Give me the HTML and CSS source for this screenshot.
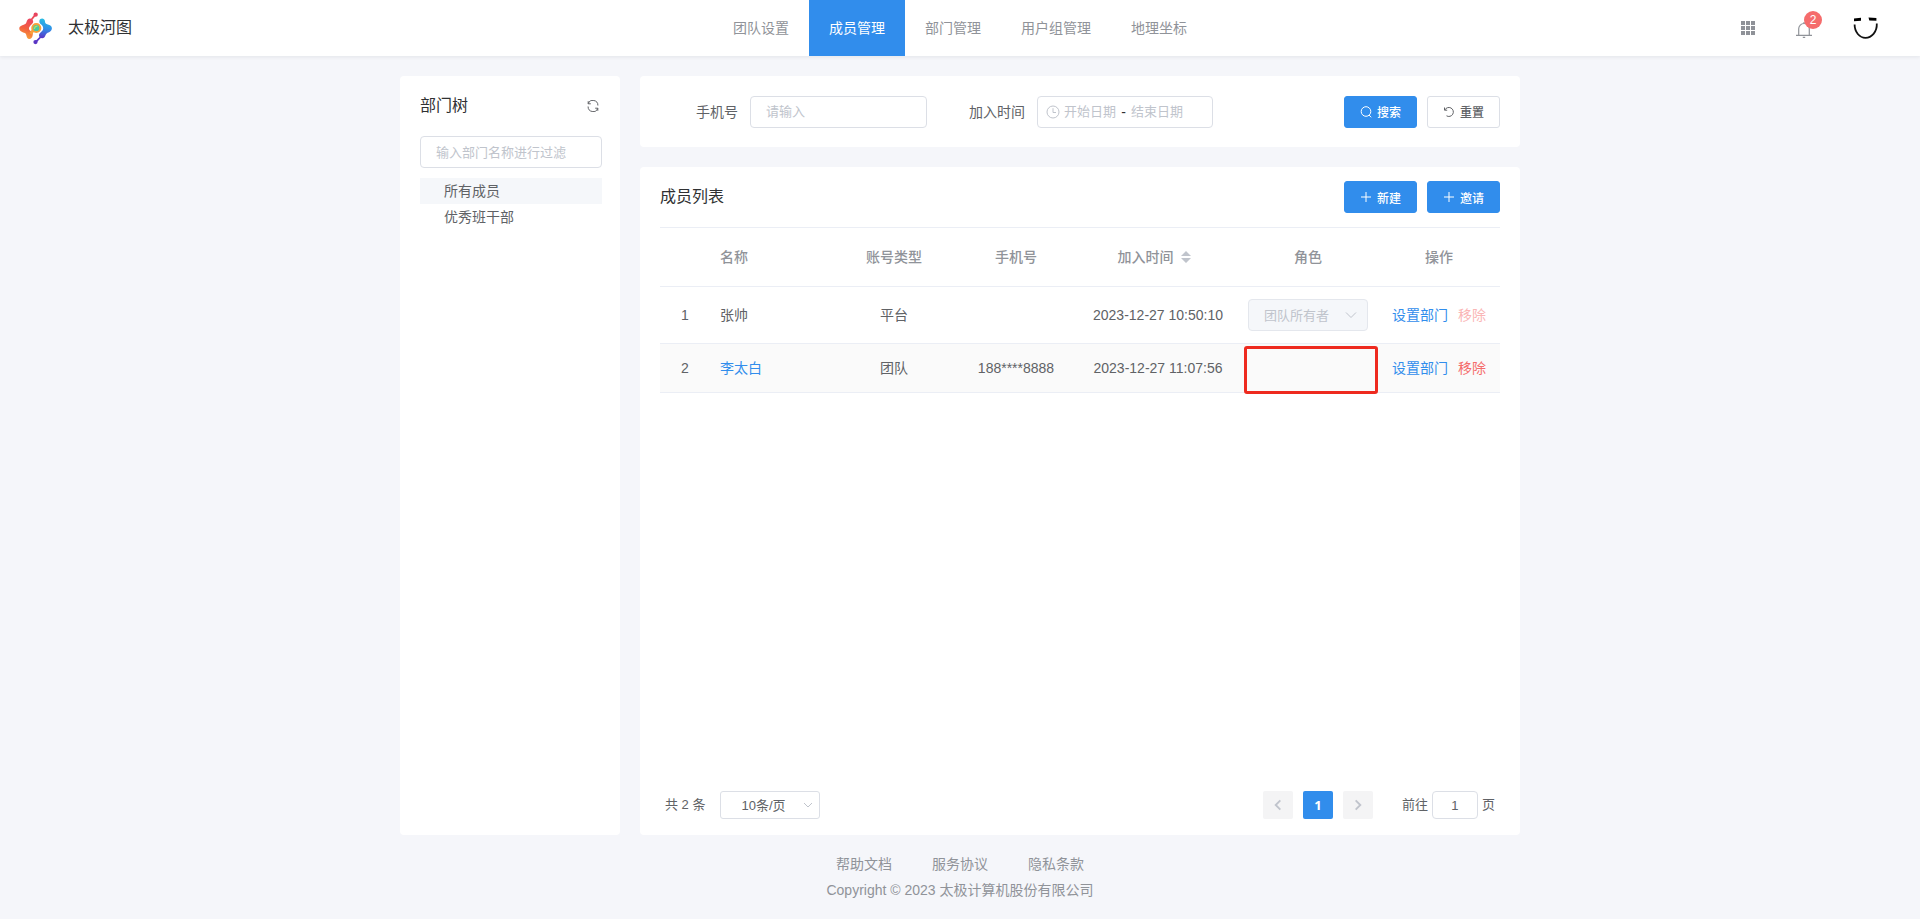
FILE: index.html
```html
<!DOCTYPE html>
<html lang="zh-CN">
<head>
<meta charset="utf-8">
<title>成员管理 - 太极河图</title>
<link rel="stylesheet" href="styles.css">
</head>
<body>
<header class="topbar">
  <div class="brand">
    <svg class="brand-logo" viewBox="0 0 34 34" aria-hidden="true">
      <defs>
        <linearGradient id="warm" x1="0.6" y1="0" x2="0.4" y2="1"><stop offset="0" stop-color="#ec4560"/><stop offset="0.5" stop-color="#f2603f"/><stop offset="1" stop-color="#f9a43a"/></linearGradient>
        <linearGradient id="cool" x1="0.5" y1="0" x2="0.4" y2="1"><stop offset="0" stop-color="#27bfe2"/><stop offset="0.5" stop-color="#2f8fe8"/><stop offset="1" stop-color="#5a35c6"/></linearGradient>
      </defs>
      <path d="M16.700 3L11.500 9.500" stroke="#ec4a58" stroke-width="1.800" fill="none"/>
      <circle cx="17.200" cy="2.800" r="2.200" fill="#e8445f"/>
      <path d="M9 7.600C11 5.600 14.800 7.200 14.600 10C14.300 12.800 10.300 14 10.300 17C10.300 19.500 13.600 19.600 14.200 22C14.400 25 13.200 28 10.500 27.800C7 27.300 8.500 22.700 6 21.600C4 20.900 0.300 20 0.300 17C0.300 14 4 13.600 6 12.600C8 11.600 7.500 9.200 9 7.600Z" fill="url(#warm)"/>
      <path d="M14.500 19L12 22.500" stroke="#f8a13c" stroke-width="3"/>
      <circle cx="17.800" cy="16.500" r="4.200" fill="#46c9a2" stroke="#f8a13c" stroke-width="2"/>
      <path d="M15.800 17.500C16 15.500 17 14.500 19 14.500" fill="none" stroke="#b5df62" stroke-width="1.200"/>
      <path d="M17.200 31L23 25" stroke="#5537ca" stroke-width="1.800" fill="none"/>
      <circle cx="17" cy="31" r="2.200" fill="#5934c3"/>
      <path d="M21 9C21.500 5.800 26.500 6 26.700 9.300C26.800 12.200 28.500 12.600 30.500 13.200C32.500 13.700 33.900 15 33.900 17C33.900 19.600 31.500 20.600 29.500 21.500C27.300 22.400 27.600 24.700 26 26.300C24.300 28 20.600 27 20.600 24C20.700 20.900 24.800 20.500 24.900 17C24.900 14.500 24 13.700 22.500 12.600C21.200 11.700 20.800 10.300 21 9Z" fill="url(#cool)"/>
    </svg>
    <span class="brand-name">太极河图</span>
  </div>
  <nav class="menu">
    <a class="menu-item" href="#">团队设置</a>
    <a class="menu-item is-active" href="#" aria-current="page">成员管理</a>
    <a class="menu-item" href="#">部门管理</a>
    <a class="menu-item" href="#">用户组管理</a>
    <a class="menu-item" href="#">地理坐标</a>
  </nav>
  <div class="tools">
    <button class="tool" type="button" aria-label="应用">
      <svg class="icon-grid" viewBox="0 0 14 14" aria-hidden="true"><path fill="#8f9298" d="M0 0h4v4H0zM5 0h4v4H5zM10 0h4v4h-4zM0 5h4v4H0zM5 5h4v4H5zM10 5h4v4h-4zM0 10h4v4H0zM5 10h4v4H5zM10 10h4v4h-4z"/></svg>
    </button>
    <button class="tool tool-bell" type="button" aria-label="消息">
      <svg class="icon-bell" viewBox="0 0 16 16" aria-hidden="true"><path d="M0 13.300H16M2.700 13V6.800A5.300 5.300 0 0 1 13.300 6.800V13M8 1.500V0M6.800 15.400H9.200" fill="none" stroke="#909399" stroke-width="1.200"/></svg>
      <span class="badge">2</span>
    </button>
    <button class="tool" type="button" aria-label="个人中心">
      <svg class="icon-face" viewBox="0 0 26 24" aria-hidden="true"><path d="M1.600 8.500C1.600 16 6.500 21.800 12.500 21.800S24.200 16 23.800 7.500" fill="none" stroke="#111" stroke-width="1.800"/><path d="M1 2.400L8 1.700V4.800L1 5.200ZM15.500 1.500L23.400 1.900V4.700L16.300 4.500Z" fill="#000"/></svg>
    </button>
  </div>
</header>

<main class="page">
  <aside class="card sidebar">
    <div class="sidebar-head">
      <h2 class="title">部门树</h2>
      <button class="refresh" type="button" aria-label="刷新">
        <svg class="icon-refresh" viewBox="0 0 12 12" aria-hidden="true"><path d="M1.200 3.700A5 5 0 0 1 10.900 5.500M1.200 1.200V3.800H3.800M10.800 8.300A5 5 0 0 1 1.100 6.500M10.800 10.800V8.200H8.200" fill="none" stroke="#606266"/></svg>
      </button>
    </div>
    <input class="field" type="text" placeholder="输入部门名称进行过滤" aria-label="部门名称">
    <ul class="tree">
      <li class="tree-node is-current">所有成员</li>
      <li class="tree-node">优秀班干部</li>
    </ul>
  </aside>

  <div class="content">
    <form class="card filter">
      <div class="filter-item">
        <label class="filter-label" for="phone">手机号</label>
        <input class="field" id="phone" type="text" placeholder="请输入">
      </div>
      <div class="filter-item filter-item-date">
        <label class="filter-label" for="date-start">加入时间</label>
        <div class="range">
          <svg class="icon-clock" viewBox="0 0 14 14" aria-hidden="true"><circle cx="7" cy="7" r="6" fill="none" stroke="#c0c4cc"/><path d="M7 3.200V7.500H10" fill="none" stroke="#c0c4cc"/></svg>
          <input class="range-input" id="date-start" type="text" placeholder="开始日期">
          <span class="range-sep">-</span>
          <input class="range-input" type="text" placeholder="结束日期" aria-label="结束日期">
        </div>
      </div>
      <div class="actions">
        <button class="btn btn-primary" type="button">
          <svg class="btn-icon" viewBox="0 0 12 12" aria-hidden="true"><circle cx="6" cy="5.500" r="4.800" fill="none" stroke="currentColor"/><path d="M9 9L11.200 11.300" stroke="currentColor"/></svg>
          <span>搜索</span>
        </button>
        <button class="btn" type="reset">
          <svg class="btn-icon" viewBox="0 0 12 12" aria-hidden="true"><path d="M1.500 1.500V4.200H4.200M1.800 4A4.500 4.500 0 1 1 3.500 9.800" fill="none" stroke="currentColor"/></svg>
          <span>重置</span>
        </button>
      </div>
    </form>

    <section class="card members">
      <div class="members-head">
        <h2 class="title">成员列表</h2>
        <div class="actions">
          <button class="btn btn-primary" type="button">
            <svg class="btn-icon" viewBox="0 0 12 12" aria-hidden="true"><path d="M6 1V11M1 6H11" stroke="currentColor"/></svg>
            <span>新建</span>
          </button>
          <button class="btn btn-primary" type="button">
            <svg class="btn-icon" viewBox="0 0 12 12" aria-hidden="true"><path d="M6 1V11M1 6H11" stroke="currentColor"/></svg>
            <span>邀请</span>
          </button>
        </div>
      </div>
      <table class="table">
        <colgroup>
          <col class="col-index"><col class="col-name"><col class="col-type"><col class="col-phone"><col class="col-time"><col class="col-role"><col class="col-ops">
        </colgroup>
        <thead>
          <tr>
            <th></th>
            <th class="cell-left">名称</th>
            <th>账号类型</th>
            <th>手机号</th>
            <th class="cell-sort"><span class="sortable">加入时间
              <svg class="icon-sort" viewBox="0 0 10 12" aria-hidden="true"><path d="M0 5L5 0L10 5ZM0 7L5 12L10 7Z" fill="#c0c4cc"/></svg></span></th>
            <th>角色</th>
            <th>操作</th>
          </tr>
        </thead>
        <tbody>
          <tr>
            <td>1</td>
            <td class="cell-left">张帅</td>
            <td>平台</td>
            <td></td>
            <td>2023-12-27 10:50:10</td>
            <td>
              <span class="select">
                <select class="select-box" aria-label="角色" disabled><option>团队所有者</option></select>
                <svg class="icon-chevron" viewBox="0 0 12 12" aria-hidden="true"><path d="M1 3.500L6 8.500L11 3.500" fill="none" stroke="#c0c4cc"/></svg>
              </span>
            </td>
            <td><span class="ops"><a class="link" href="#">设置部门</a><a class="link link-danger is-disabled" aria-disabled="true">移除</a></span></td>
          </tr>
          <tr class="is-hover">
            <td>2</td>
            <td class="cell-left"><a class="link" href="#">李太白</a></td>
            <td>团队</td>
            <td>188****8888</td>
            <td>2023-12-27 11:07:56</td>
            <td class="cell-marked"><span class="marker"></span></td>
            <td><span class="ops"><a class="link" href="#">设置部门</a><a class="link link-danger" href="#">移除</a></span></td>
          </tr>
        </tbody>
      </table>
      <div class="pagination">
        <span>共 2 条</span>
        <span class="select select-size">
          <select class="select-box" aria-label="每页条数"><option>10条/页</option></select>
          <svg class="icon-chevron" viewBox="0 0 12 12" aria-hidden="true"><path d="M2 4L6 8L10 4" fill="none" stroke="#c0c4cc"/></svg>
        </span>
        <div class="pager">
          <button class="page-btn" type="button" aria-label="上一页" disabled><svg class="icon-arrow" viewBox="0 0 12 12" aria-hidden="true"><path d="M8 2L4 6L8 10" fill="none" stroke="#c0c4cc" stroke-width="1.600"/></svg></button>
          <button class="page-btn is-active" type="button">1</button>
          <button class="page-btn" type="button" aria-label="下一页" disabled><svg class="icon-arrow" viewBox="0 0 12 12" aria-hidden="true"><path d="M4 2L8 6L4 10" fill="none" stroke="#c0c4cc" stroke-width="1.600"/></svg></button>
        </div>
        <div class="jump">
          <label for="jump">前往</label>
          <input class="jump-input" id="jump" type="text" value="1">
          <span>页</span>
        </div>
      </div>
    </section>
  </div>
</main>

<footer class="footer">
  <div class="footer-links">
    <a class="footer-link" href="#">帮助文档</a>
    <a class="footer-link" href="#">服务协议</a>
    <a class="footer-link" href="#">隐私条款</a>
  </div>
  <div>Copyright © 2023 太极计算机股份有限公司</div>
</footer>
</body>
</html>
```

FILE: styles.css
```css
* { box-sizing: border-box; }

body {
  display: flex;
  flex-direction: column;
  min-height: 100vh;
  margin: 0;
  background: #f5f6fa;
  color: #606266;
  font: 14px/20px "Liberation Sans", "Noto Sans CJK SC", sans-serif;
}

button, input, select { font-family: inherit; color: inherit; }
button { cursor: pointer; }
a { text-decoration: none; }
svg { display: block; flex: none; }

/* Top bar */
.topbar {
  display: grid;
  grid-template-columns: 1fr auto 1fr;
  align-items: center;
  height: 56px;
  background: #fff;
  box-shadow: 0 1px 4px rgba(0, 21, 41, 0.08);
}
.brand { display: flex; align-items: center; gap: 16px; padding-left: 19px; }
.brand-logo { width: 33px; height: 33px; }
.brand-name { font-size: 16px; color: #303133; }
.menu { display: flex; }
.menu-item { padding: 0 20px; line-height: 56px; color: #909399; }
.menu-item.is-active { background: #318dec; color: #fff; }
.tools { display: flex; justify-content: flex-end; align-items: center; gap: 41px; padding-right: 41px; }
.tool { position: relative; padding: 0; border: 0; background: none; }
.icon-grid { width: 14px; height: 14px; }
.tool-bell { padding-top: 4px; }
.icon-bell { width: 16px; height: 16px; }
.icon-face { width: 26px; height: 24px; }
.badge {
  position: absolute;
  top: -7px;
  right: -10px;
  width: 18px;
  height: 18px;
  border-radius: 9px;
  background: #f56c6c;
  color: #fff;
  font-size: 12px;
  line-height: 18px;
  text-align: center;
}

/* Page frame */
.page {
  display: flex;
  flex: 1;
  gap: 20px;
  width: 100%;
  max-width: 1160px;
  margin: 0 auto;
  padding: 20px 20px 0;
}
.card { border-radius: 4px; background: #fff; }
.title { margin: 0; font-size: 16px; font-weight: 400; line-height: 24px; color: #303133; }
.content { display: flex; flex: 1; flex-direction: column; gap: 20px; min-width: 0; }

/* Department tree */
.sidebar { flex: none; width: 220px; padding: 18px; padding-left: 20px; }
.sidebar-head { display: flex; justify-content: space-between; align-items: center; margin-bottom: 18px; }
.refresh { padding: 3px; border: 0; background: none; }
.icon-refresh { width: 12px; height: 12px; }
.field {
  width: 100%;
  height: 32px;
  padding: 0 15px;
  border: 1px solid #dcdfe6;
  border-radius: 4px;
  background: #fff;
  font-size: 13px;
}
input::placeholder { color: #c0c4cc; opacity: 1; }
.tree { margin: 10px 0 0; padding: 0; list-style: none; }
.tree-node { padding-left: 24px; line-height: 26px; }
.tree-node.is-current { background: #f5f7fa; }

/* Filters */
.filter { display: flex; align-items: center; min-height: 71px; padding: 0 20px 0 56px; }
.filter-item { display: flex; align-items: center; gap: 12px; }
.filter-item .field { width: 177px; }
.filter-item-date { margin-left: 42px; }
.range {
  display: flex;
  align-items: center;
  gap: 4px;
  width: 176px;
  height: 32px;
  padding: 0 8px;
  border: 1px solid #dcdfe6;
  border-radius: 4px;
}
.icon-clock { width: 14px; height: 14px; }
.range-input { width: 52px; padding: 0; border: 0; background: none; font-size: 13px; outline: 0; }
.range-sep { width: 7px; color: #303133; text-align: center; }
.actions { display: flex; gap: 10px; margin-left: auto; }
.btn {
  display: flex;
  justify-content: center;
  align-items: center;
  gap: 5px;
  width: 73px;
  height: 32px;
  padding: 0;
  border: 1px solid #dcdfe6;
  border-radius: 3px;
  background: #fff;
  font-size: 12px;
  font-weight: 500;
}
.btn-primary { border-color: #318dec; background: #318dec; color: #fff; }
.btn-icon { width: 12px; height: 12px; }

/* Member list */
.members { display: flex; flex: 1; flex-direction: column; padding: 14px 20px 16px; }
.members-head { display: flex; align-items: center; margin-bottom: 14px; }
.table { width: 100%; border-collapse: collapse; border-top: 1px solid #ebeef5; table-layout: fixed; text-align: center; }
.col-index { width: 50px; }
.col-type { width: 120px; }
.col-phone { width: 124px; }
.col-time { width: 160px; }
.col-role { width: 140px; }
.col-ops { width: 122px; }
.table th { height: 59px; padding: 0; color: #909399; font-weight: 500; }
.table td { height: 49px; padding: 12px 0; }
.table tr { border-bottom: 1px solid #ebeef5; }
.table .cell-left { padding-left: 10px; text-align: left; }
.table .cell-sort { padding-right: 8px; }
.is-hover { background: #fafafa; }
.sortable { display: inline-flex; align-items: center; gap: 7px; }
.icon-sort { width: 10px; height: 12px; }
.ops { display: flex; justify-content: center; gap: 10px; }
.link { color: #318dec; }
.link-danger { color: #f56c6c; }
.link.is-disabled { color: #fab6b6; }
.cell-marked { position: relative; }
.marker {
  position: absolute;
  inset: 2px 0 -2px 6px;
  border: 3px solid #ee2a1f;
  border-radius: 3px;
}

/* Drop-downs */
.select { display: inline-flex; position: relative; width: 120px; vertical-align: top; }
.select-box {
  width: 100%;
  height: 32px;
  padding: 0 30px 0 15px;
  border: 1px solid #dcdfe6;
  border-radius: 4px;
  background: #fff;
  font-size: 13px;
  appearance: none;
}
.select-box:disabled { border-color: #e4e7ed; background: #f5f7fa; color: #c0c4cc; opacity: 1; }
.select .icon-chevron { position: absolute; top: 50%; right: 11px; width: 12px; height: 12px; margin-top: -6px; pointer-events: none; }
.select-size { width: 100px; margin-left: 15px; }
.select-size .select-box { height: 28px; padding: 0 25px 0 20px; border-radius: 3px; }
.select-size .icon-chevron { right: 6px; }

/* Pagination */
.pagination { display: flex; align-items: center; margin-top: auto; padding: 0 5px; font-size: 13px; }
.pager { display: flex; gap: 10px; margin-left: auto; }
.page-btn {
  display: flex;
  justify-content: center;
  align-items: center;
  width: 30px;
  height: 28px;
  padding: 0;
  border: 0;
  border-radius: 2px;
  background: #f4f4f5;
  font-family: "Noto Sans", sans-serif;
  font-size: 13px;
  font-weight: 700;
}
.page-btn.is-active { background: #318dec; color: #fff; }
.icon-arrow { width: 14px; height: 14px; }
.jump { display: flex; align-items: center; gap: 4px; margin-left: 29px; }
.jump-input { width: 46px; height: 28px; padding: 0; border: 1px solid #dcdfe6; border-radius: 4px; background: #fff; font-size: 13px; text-align: center; }

/* Footer */
.footer { padding: 16px 0; color: #909399; line-height: 26px; text-align: center; }
.footer-links { display: flex; justify-content: center; gap: 40px; }
.footer-link { color: inherit; }
```
